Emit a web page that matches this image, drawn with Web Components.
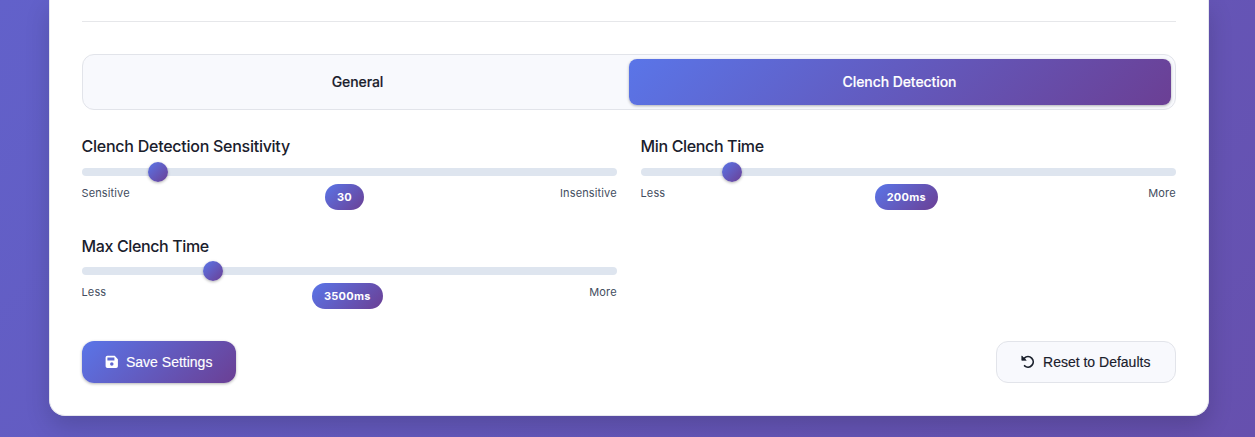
<!DOCTYPE html>
<html lang="en">
<head>
<meta charset="utf-8">
<title>Clench Settings</title>
<style>
html,body{margin:0;height:437px;overflow:hidden}
body{--brand:linear-gradient(135deg,#5a75e8 0%,#6b3f94 100%);--line:#e2e4ea;--soft:#f8f9fd;--ink:#1a202c;
font-family:Inter,"Liberation Sans",sans-serif;color:var(--ink);
background:linear-gradient(135deg,#6261ca 0%,#6650ae 100%)}
</style>
</head>
<body>
<settings-card>
  <tab-bar>
    <tab-item>General</tab-item>
    <tab-item active>Clench Detection</tab-item>
  </tab-bar>
  <range-grid>
    <range-field label="Clench Detection Sensitivity" low="Sensitive" high="Insensitive" value="30" style="--pos:66px"></range-field>
    <range-field label="Min Clench Time" low="Less" high="More" value="200ms" style="--pos:81px;--track:-.36px"></range-field>
    <range-field label="Max Clench Time" low="Less" high="More" value="3500ms" style="--pos:121px;--track:-.38px"></range-field>
  </range-grid>
  <action-button slot="actions" primary>
    <svg slot="icon" width="14" height="14" viewBox="0 0 14 14"><path fill="#fff" fill-rule="evenodd" d="M2.4 .8H9.7L12.9 4.2V11.2A1.8 1.8 0 0 1 11.1 13H2.4A1.8 1.8 0 0 1 .6 11.2V2.6A1.8 1.8 0 0 1 2.4 .8ZM2.4 2.6V5.4H9.4V2.6ZM6.8 7.3A1.75 1.75 0 1 0 6.8 10.8A1.75 1.75 0 1 0 6.8 7.3Z"/></svg>
    Save Settings</action-button>
  <action-button slot="actions">
    <svg slot="icon" width="14" height="14" viewBox="0 0 14 14" fill="none" stroke="#1a202c"><path stroke-width="1.75" stroke-linecap="round" d="M3.4 3.1A5.2 5.2 0 1 1 3.6 10.8"/><path fill="#1a202c" stroke-width=".7" stroke-linejoin="round" d="M.8 .9 5.2 5.3H.8Z"/></svg>
    Reset to Defaults</action-button>
</settings-card>
<script>
function define(name, html) {
  customElements.define(name, class extends HTMLElement {
    constructor() {
      super();
      this.attachShadow({mode: 'open'}).innerHTML = html;
    }
    connectedCallback() {
      this.shadowRoot.querySelectorAll('[data-attr]').forEach(n => {
        n.textContent = this.getAttribute(n.dataset.attr);
      });
    }
  });
}
define('settings-card', `<style>
:host{display:block;box-sizing:border-box;width:1160px;height:416px;margin:0 0 0 49px;padding:21px 32px 0;background:#fff;border:1px solid #e6e7ee;border-top:0;border-radius:0 0 16px 16px;box-shadow:0 10px 25px rgba(0,0,0,.16)}
hr{height:1px;border:0;margin:0 0 32px;background:#e6e7ea}
footer{display:flex;justify-content:space-between;margin-top:32.2px}
</style><hr><slot></slot><footer><slot name="actions"></slot></footer>`);
define('tab-bar', `<style>
:host{display:grid;grid-template-columns:1fr 1fr;box-sizing:border-box;height:56px;padding:4px;background:var(--soft);border:1px solid var(--line);border-radius:12px}
</style><slot></slot>`);
define('tab-item', `<style>
:host{display:flex;align-items:center;justify-content:center;padding:0 1px 2px 0;border-radius:8px;font-size:14px;font-weight:500;letter-spacing:-.08px;-webkit-text-stroke:.15px currentColor}
:host([active]){background:var(--brand);color:#fff;box-shadow:0 1px 3px rgba(0,0,0,.3)}
</style><slot></slot>`);
define('range-grid', `<style>
:host{display:grid;grid-template-columns:1fr 1fr;column-gap:24px;row-gap:24px;margin-top:24.4px}
</style><slot></slot>`);
define('range-field', `<style>
:host{display:block;height:75.2px}
.label{display:block;height:24px;line-height:24px;font-size:16px;font-weight:500;letter-spacing:var(--track,-.26px);margin-left:-.4px}
.track{height:8px;margin-top:9.6px;border-radius:4px;background:#dee5ef}
.thumb{position:relative;top:-6px;width:20px;height:20px;margin-left:var(--pos);border-radius:50%;background:var(--brand);box-shadow:0 1px 3px rgba(0,0,0,.3)}
.row{display:flex;justify-content:space-between;align-items:flex-start;margin:8px .3px 0 -.5px;font-size:11px;line-height:18px;letter-spacing:.13px;color:#434d60}
.pill{height:26px;line-height:26px;margin:0 .5px 0 -.5px;padding:0 12px;border-radius:13px;background:var(--brand);color:#fff;font-weight:700;letter-spacing:.24px}
</style><span class="label" data-attr="label"></span><div class="track"><div class="thumb"></div></div>
<div class="row"><span data-attr="low"></span><span class="pill" data-attr="value"></span><span data-attr="high"></span></div>`);
define('action-button', `<style>
:host{display:flex;align-items:center;box-sizing:border-box;height:42px;padding:0 24.6px 0 24px;gap:8px;border:1px solid var(--line);border-radius:12px;background:var(--soft);font:500 14px "Liberation Sans",Arial,sans-serif;-webkit-text-stroke:.15px currentColor}
:host([primary]){padding:0 24px 0 23px;gap:7px;border:0;background:var(--brand);color:#fff;box-shadow:0 1px 3px rgba(0,0,0,.3)}
::slotted(svg){display:block}
</style><slot name="icon"></slot><span><slot></slot></span>`);
</script>
</body>
</html>
